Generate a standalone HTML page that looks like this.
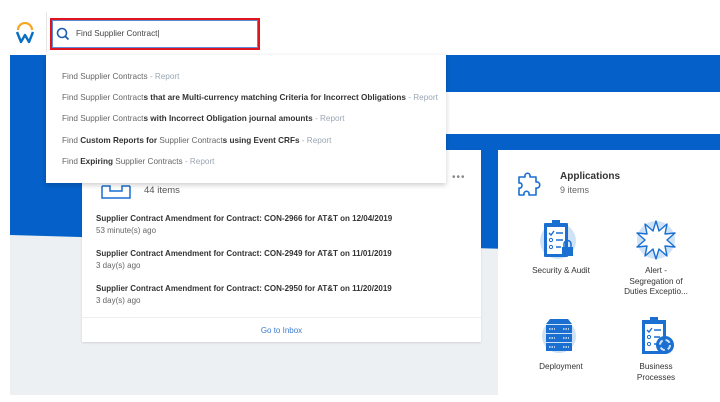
<!DOCTYPE html>
<html><head><meta charset="utf-8"><style>
*{margin:0;padding:0;box-sizing:border-box}
body{width:720px;height:402px;overflow:hidden;background:#fff;font-family:"Liberation Sans",Arial,sans-serif;position:relative}
.abs{position:absolute}
.dd div{position:absolute;left:16px;font-size:8.2px;color:#666;white-space:nowrap}
.dd b{color:#333;font-weight:bold}
.dd i{font-style:normal;color:#9aa6b3}
.it{position:absolute;left:14px;font-size:8px;color:#333;font-weight:bold;white-space:nowrap}
.it span{display:block;font-weight:normal;color:#666;margin-top:3px}
.lbl{position:absolute;font-size:8.2px;color:#333;text-align:center;width:90px;line-height:10.5px}
</style></head><body>
<!-- background -->
<div class="abs" style="left:10px;top:55px;width:710px;height:340px;background:#edf0f3"></div>
<svg class="abs" style="left:10px;top:55px" width="710" height="210"><polygon points="0,0 710,0 710,200 0,180" fill="#0561c9"/><rect x="436" y="37" width="274" height="42" fill="#fff"/></svg>
<!-- header -->
<div class="abs" style="left:46px;top:12px;width:1px;height:40px;background:#e5e5e5"></div>
<svg class="abs" style="left:14px;top:22px" width="22" height="22" viewBox="0 0 22 22"><path d="M4 8 A7 7 0 0 1 18 8" fill="none" stroke="#f5a623" stroke-width="2.2"/><path d="M3 10 L7 20 L11 13 L15 20 L19 10" fill="none" stroke="#0a6fc2" stroke-width="2.4" stroke-linejoin="round"/></svg>
<div class="abs" style="left:50px;top:18px;width:210px;height:32px;border:2px solid #e0141e"></div>
<div class="abs" style="left:52px;top:20px;width:206px;height:28px;border:1px solid #5b8bd6"></div>
<svg class="abs" style="left:56px;top:27px" width="14" height="14" viewBox="0 0 14 14"><circle cx="6" cy="6" r="4.5" fill="none" stroke="#1a5fb4" stroke-width="1.6"/><path d="M9.3 9.3 L12.5 12.5" stroke="#1a5fb4" stroke-width="1.8"/></svg>
<div class="abs" style="left:76px;top:29px;font-size:8.2px;color:#444">Find Supplier Contract|</div>
<!-- left card -->
<div class="abs" style="left:82px;top:150px;width:399px;height:192px;background:#fff;box-shadow:0 1px 2px rgba(0,0,0,.12)">
 <div class="abs" style="left:370px;top:22px;font-size:10px;color:#888;letter-spacing:1px">•••</div>
 <svg class="abs" style="left:18px;top:28px" width="32" height="22" viewBox="0 0 32 22"><path d="M2 8 L2 20 L30 20 L30 8 M2 8 L10 8 L10 13 L22 13 L22 8 L30 8" fill="none" stroke="#1a6fd0" stroke-width="1.5"/><path d="M5 2 L5 5 M27 2 L27 5" stroke="#1a6fd0" stroke-width="1.5"/></svg>
 <div class="abs" style="left:62px;top:35px;font-size:9.5px;color:#555">44 items</div>
 <div class="it" style="top:64px">Supplier Contract Amendment for Contract: CON-2966 for AT&amp;T on 12/04/2019<span>53 minute(s) ago</span></div>
 <div class="it" style="top:99px">Supplier Contract Amendment for Contract: CON-2949 for AT&amp;T on 11/01/2019<span>3 day(s) ago</span></div>
 <div class="it" style="top:134px">Supplier Contract Amendment for Contract: CON-2950 for AT&amp;T on 11/20/2019<span>3 day(s) ago</span></div>
 <div class="abs" style="left:0;top:167px;width:399px;height:1px;background:#eee"></div>
 <div class="abs" style="left:0;top:176px;width:399px;text-align:center;font-size:8px;color:#3b7bd0">Go to Inbox</div>
</div>
<!-- right card -->
<div class="abs" style="left:498px;top:150px;width:222px;height:245px;background:#fff">
 <svg class="abs" style="left:18px;top:18px" width="30" height="30" viewBox="0 0 30 30"><path d="M3 9 L9 9 C8 4 15 4 14 9 L20 9 L20 14 C25 13 25 21 20 20 L20 27 L13 27 C14 22 7 22 8 27 L3 27 L3 20 C7 21 7 14 3 15 Z" fill="none" stroke="#1a6fd0" stroke-width="1.6" stroke-linejoin="round"/></svg>
 <div class="abs" style="left:62px;top:21px;font-size:10px;font-weight:bold;color:#333">Applications</div>
 <div class="abs" style="left:62px;top:35px;font-size:9px;color:#666">9 items</div>
 <svg class="abs" style="left:40px;top:67px" width="40" height="44" viewBox="0 0 40 44"><circle cx="20" cy="24" r="18" fill="#cfe2f6"/><rect x="6" y="6" width="24" height="34" rx="1" fill="#1a6fd0"/><rect x="9" y="10" width="18" height="27" fill="#fff"/><rect x="14" y="3" width="8" height="5" fill="#1a6fd0"/><path d="M11 16 l2 2 l3 -4 M18 16 h7 M18 23 h7 M18 30 h5" stroke="#1a6fd0" stroke-width="1.4" fill="none"/><circle cx="13" cy="23" r="1.6" fill="none" stroke="#1a6fd0"/><circle cx="13" cy="30" r="1.6" fill="none" stroke="#1a6fd0"/><rect x="24" y="30" width="11" height="9" fill="#1a6fd0"/><path d="M26 30 v-3 a3.5 3.5 0 0 1 7 0 v3" fill="none" stroke="#1a6fd0" stroke-width="1.5"/></svg>
 <div class="lbl" style="left:18px;top:116px">Security &amp; Audit</div>
 <svg class="abs" style="left:136px;top:68px" width="44" height="44" viewBox="0 0 44 44"><circle cx="22" cy="22" r="19" fill="#cfe2f6"/><polygon points="22,3 25,13 33,6 31,16 41,15 33,22 41,29 31,28 33,38 25,31 22,41 19,31 11,38 13,28 3,29 11,22 3,15 13,16 11,6 19,13" fill="#fff" stroke="#1a6fd0" stroke-width="1.4" stroke-linejoin="round"/></svg>
 <div class="lbl" style="left:113px;top:116px">Alert -<br>Segregation of<br>Duties Exceptio...</div>
 <svg class="abs" style="left:42px;top:166px" width="38" height="40" viewBox="0 0 38 40"><circle cx="19" cy="20" r="17" fill="#cfe2f6"/><path d="M6 8 L10 3 L28 3 L32 8 Z" fill="#1a6fd0"/><rect x="6" y="9" width="26" height="8" fill="#1a6fd0"/><rect x="6" y="18" width="26" height="8" fill="#1a6fd0"/><rect x="6" y="27" width="26" height="8" fill="#1a6fd0"/><path d="M9 13 h6 M9 22 h6 M9 31 h6 M23 13 h6 M23 22 h6 M23 31 h6" stroke="#fff" stroke-width="1.3" stroke-dasharray="1.5 1"/></svg>
 <div class="lbl" style="left:18px;top:212px">Deployment</div>
 <svg class="abs" style="left:140px;top:165px" width="40" height="42" viewBox="0 0 40 42"><rect x="4" y="5" width="24" height="34" fill="#1a6fd0"/><rect x="7" y="9" width="18" height="27" fill="#fff"/><rect x="12" y="2" width="8" height="5" fill="#1a6fd0"/><path d="M9 15 l2 2 l3 -4 M16 15 h7 M16 22 h6 M16 29 h5" stroke="#1a6fd0" stroke-width="1.4" fill="none"/><circle cx="11" cy="22" r="1.6" fill="none" stroke="#1a6fd0"/><circle cx="11" cy="29" r="1.6" fill="none" stroke="#1a6fd0"/><circle cx="27" cy="30" r="9" fill="#1a6fd0"/><circle cx="27" cy="30" r="5" fill="none" stroke="#cfe2f6" stroke-width="2" stroke-dasharray="5 3"/></svg>
 <div class="lbl" style="left:113px;top:212px">Business<br>Processes</div>
</div>
<!-- dropdown -->
<div class="abs dd" style="left:46px;top:55px;width:400px;height:128px;background:#fff;box-shadow:0 2px 5px rgba(0,0,0,.2)">
 <div style="top:17px">Find Supplier Contracts <i>- Report</i></div>
 <div style="top:38px">Find Supplier Contract<b>s that are Multi-currency matching Criteria for Incorrect Obligations</b> <i>- Report</i></div>
 <div style="top:59px">Find Supplier Contract<b>s with Incorrect Obligation journal amounts</b> <i>- Report</i></div>
 <div style="top:81px">Find <b>Custom Reports for</b> Supplier Contract<b>s using Event CRFs</b> <i>- Report</i></div>
 <div style="top:102px">Find <b>Expiring</b> Supplier Contracts <i>- Report</i></div>
</div>
</body></html>
